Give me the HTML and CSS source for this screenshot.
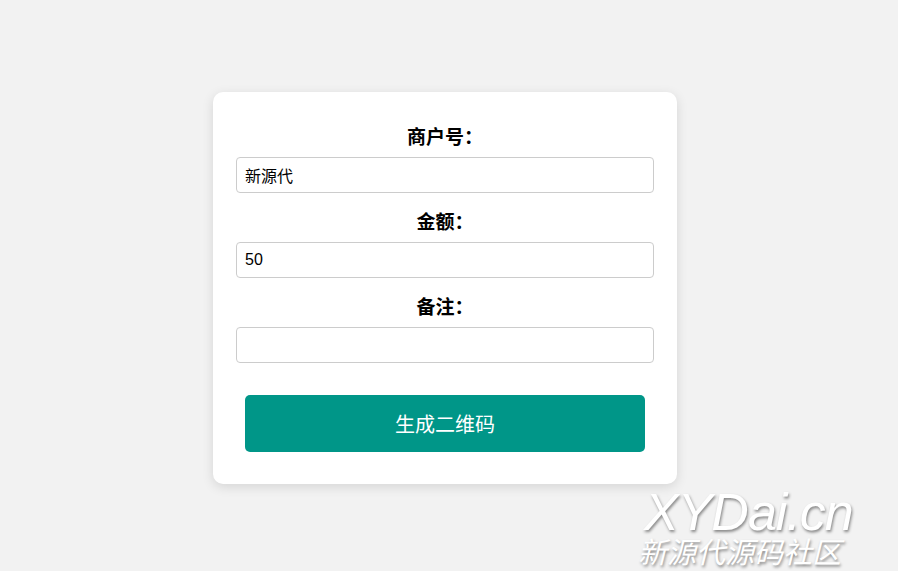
FILE: index.html
```html
<!DOCTYPE html>
<html lang="zh-CN">
<head>
    <meta charset="UTF-8">
    <meta name="viewport" content="width=device-width, initial-scale=1.0">
    <title>生成二维码</title>
    <link rel="stylesheet" href="styles.css">
</head>
<body>
    <div class="container">
        <form id="qrForm">
            <div class="form-group">
                <label for="merchant">商户号：</label>
                <input type="text" id="merchant" name="merchant" value="新源代">
            </div>
            <div class="form-group">
                <label for="amount">金额：</label>
                <input type="text" id="amount" name="amount" value="50">
            </div>
            <div class="form-group">
                <label for="remark">备注：</label>
                <input type="text" id="remark" name="remark">
            </div>
            <button type="submit">生成二维码</button>
        </form>
    </div>

    <div class="watermark">
        <div class="wm-en">XYDai.cn</div>
        <div class="wm-cn">新源代源码社区</div>
    </div>
</body>
</html>
```

FILE: styles.css
```css
body {
    font-family: "Liberation Sans", "Noto Sans CJK SC", sans-serif;
    margin: 0;
    padding: 92px 8px 0 0;
    min-height: 571px;
    box-sizing: border-box;
    background-color: #f2f2f2;
    display: flex;
    justify-content: center;
    align-items: flex-start;
}
.container {
    width: 464px;
    box-sizing: border-box;
    background-color: white;
    padding: 33px 23px 32px;
    border-radius: 10px;
    box-shadow: 0 3px 12px rgba(0,0,0,0.12);
}
.form-group {
    margin-bottom: 17px;
}
label {
    display: block;
    text-align: center;
    margin-bottom: 10px;
    font-family: "Noto Sans CJK SC", sans-serif;
    font-size: 19px;
    line-height: 22px;
    font-weight: bold;
    color: #000;
}
input {
    width: 100%;
    height: 36px;
    padding: 0 8px;
    font-family: "Liberation Sans", "Noto Sans CJK SC", sans-serif;
    font-size: 16px;
    color: #000;
    border: 1px solid #ccc;
    border-radius: 4px;
    box-sizing: border-box;
}
button {
    display: block;
    width: 400px;
    height: 57px;
    margin: 32px auto 0;
    background-color: #009688;
    color: white;
    font-family: "Noto Sans CJK SC", sans-serif;
    font-size: 20px;
    border: none;
    border-radius: 5px;
    cursor: pointer;
}
.watermark {
    position: absolute;
    left: 638px;
    top: 484px;
    color: #fff;
    text-shadow: 1px 2px 3px rgba(0,0,0,0.45);
    pointer-events: none;
}
.wm-en {
    font-family: "Liberation Sans", sans-serif;
    font-style: italic;
    font-size: 52px;
    line-height: 56px;
    letter-spacing: -1px;
    padding-left: 6px;
}
.wm-cn {
    font-family: "Noto Sans CJK SC", sans-serif;
    font-style: italic;
    font-size: 29px;
    line-height: 30px;
    margin-top: -5px;
}
```
